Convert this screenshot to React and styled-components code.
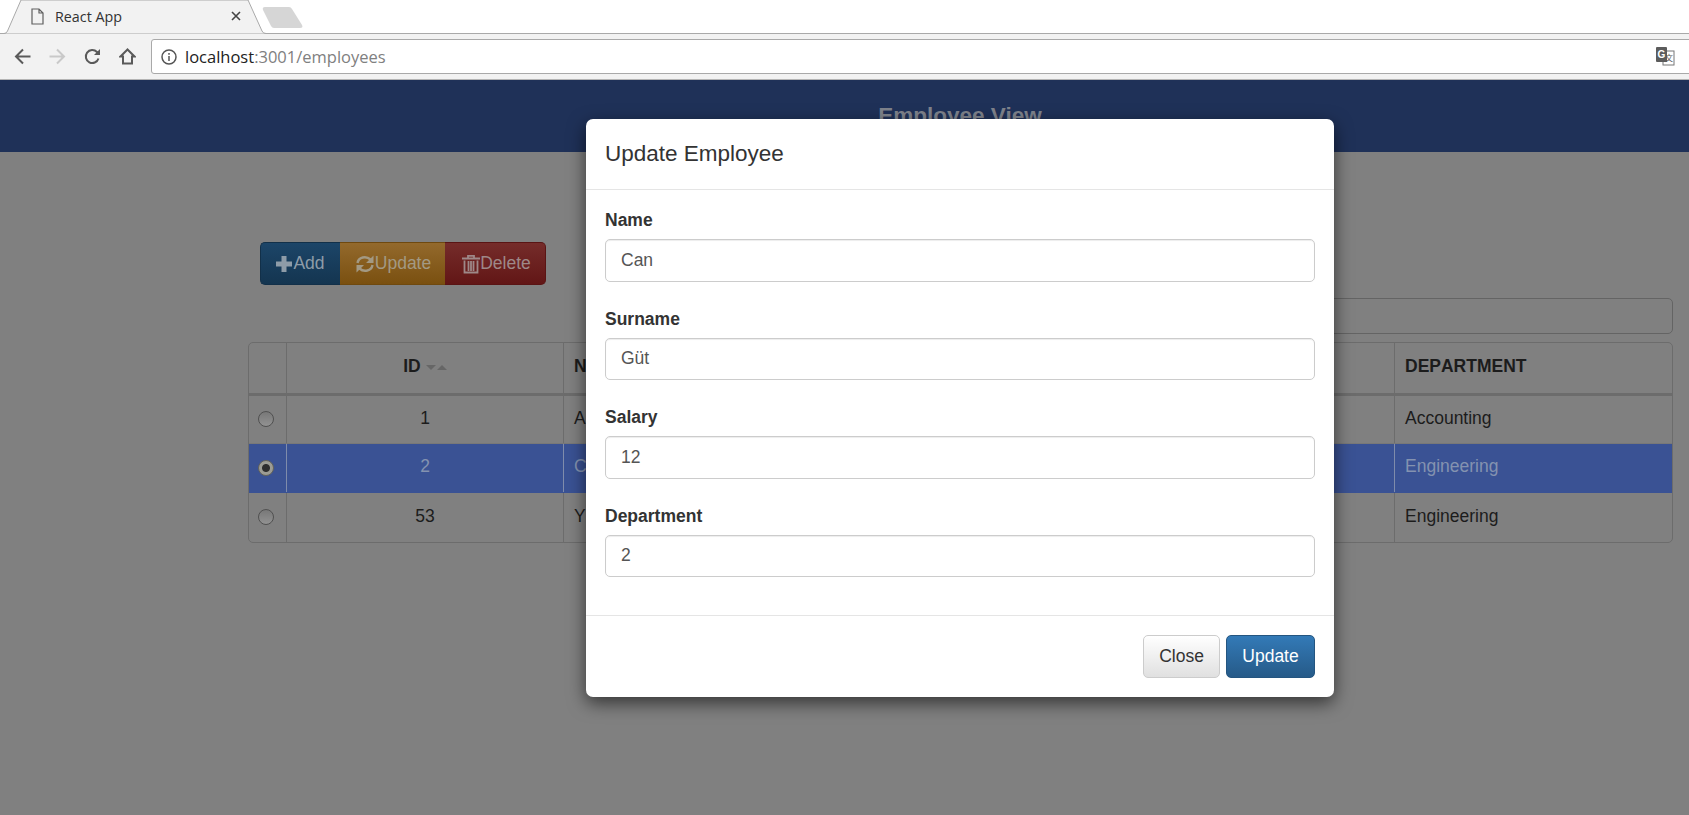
import React from "react";
import styled, { createGlobalStyle } from "styled-components";

const GlobalStyle = createGlobalStyle`
  html, body {
    margin: 0;
    height: 100%;
    overflow: hidden;
    background: #808080;
  }
  * {
    box-sizing: border-box;
  }
`;

const Screen = styled.div`
  height: 815px;
  overflow: hidden;
  font-family: "Liberation Sans", Arial, sans-serif;
`;

/* browser chrome */
const TabStrip = styled.div`
  height: 34px;
  background: #fff;
  border-bottom: 1px solid #a9a9a9;
  display: flex;
  align-items: flex-start;
`;

const Tab = styled.div`
  position: relative;
  width: 268px;
  height: 34px;
  display: flex;
  align-items: center;
  padding: 0 27px 2px 31px;
  gap: 11px;
  flex: none;
`;

const TabShape = styled.svg`
  position: absolute;
  left: 0;
  top: 0;
`;

const TabTitle = styled.span`
  position: relative;
  flex: 1;
  font: 14.3px "Open Sans", sans-serif;
  color: #333;
`;

const TabIcon = styled.svg`
  position: relative;
  flex: none;
`;

const TabClose = styled.svg`
  position: relative;
  flex: none;
`;

const NewTab = styled.svg`
  flex: none;
  margin: 7px 0 0 -6px;
`;

const Toolbar = styled.div`
  height: 46px;
  background: #f2f2f2;
  border-bottom: 1px solid #b4b4b4;
  display: flex;
  align-items: center;
  padding: 0 0 0 14px;
`;

const NavIcons = styled.div`
  display: flex;
  align-items: center;
  gap: 18px;
  flex: none;
  margin-right: 15px;
`;

const AddressBar = styled.div`
  flex: 1;
  height: 35px;
  margin-right: -6px;
  background: #fff;
  border: 1px solid #a9a9a9;
  border-radius: 3px;
  display: flex;
  align-items: center;
  padding: 0 19px 0 9px;
  font: 16.5px "Open Sans", sans-serif;
`;

const UrlHost = styled.span`
  color: #222;
  margin-left: 8px;
`;

const UrlRest = styled.span`
  color: #808080;
  flex: 1;
`;

/* page */
const Viewport = styled.div`
  position: relative;
  width: 1920px;
  height: 735px;
  background: #808080;
  font-size: 17.5px;
`;

const Banner = styled.header`
  height: 72px;
  background: #1f3158;
  color: #7f838c;
  font-size: 22.5px;
  font-weight: bold;
  display: flex;
  align-items: center;
  justify-content: center;
`;

const Content = styled.main`
  width: 1425px;
  margin: 0 auto;
  padding-top: 90px;
`;

const ButtonGroup = styled.div`
  display: flex;
  margin-left: 12px;
  height: 43px;
`;

const ActionButton = styled.button`
  height: 43px;
  width: ${(p) => p.$width}px;
  display: flex;
  align-items: center;
  justify-content: center;
  padding: 0 0 0 ${(p) => p.$inset || 0}px;
  border: 1px solid ${(p) => p.$edge};
  border-width: 1px 0;
  background: linear-gradient(${(p) => p.$top}, ${(p) => p.$bottom});
  color: ${(p) => p.$text};
  font: 17.5px "Liberation Sans", Arial, sans-serif;
  &:first-child {
    border-radius: 5px 0 0 5px;
    border-left-width: 1px;
  }
  &:last-child {
    border-radius: 0 5px 5px 0;
    border-right-width: 1px;
  }
`;

const SearchRow = styled.div`
  display: flex;
  justify-content: flex-end;
  margin-top: 13px;
`;

const SearchBox = styled.div`
  width: 712px;
  height: 36px;
  border: 1px solid #646464;
  border-radius: 5px;
`;

const TableFrame = styled.div`
  margin-top: 8px;
  border: 1px solid #6c6c6c;
  border-radius: 5px;
  overflow: hidden;
`;

const Table = styled.table`
  width: 100%;
  table-layout: fixed;
  border-collapse: collapse;
  color: #1c1c1c;
  font-kerning: none;
`;

const HeadCell = styled.th`
  height: 51px;
  padding: 0 10px 2px;
  font-weight: bold;
  text-align: ${(p) => (p.$center ? "center" : "left")};
  border-right: 1px solid #6c6c6c;
  border-bottom: 3px solid #6c6c6c;
  &:last-child {
    border-right: 0;
  }
`;

const Row = styled.tr`
  background: ${(p) => (p.$selected ? "#3a5294" : "transparent")};
  color: ${(p) => (p.$selected ? "#8492b0" : "#1c1c1c")};
`;

const Cell = styled.td`
  height: 49.3px;
  padding: 0 10px 2px;
  text-align: ${(p) => (p.$center ? "center" : "left")};
  border-right: 1px solid ${(p) => (p.$selected ? "#7f8cab" : "#6c6c6c")};
  border-bottom: 1px solid ${(p) => (p.$selected ? "#3a5294" : "#787878")};
  &:last-child {
    border-right: 0;
  }
  tr:last-child & {
    border-bottom: 0;
  }
`;

const SortCarets = styled.span`
  display: inline-flex;
  align-items: center;
  gap: 1px;
  margin-left: 5px;
  vertical-align: middle;
`;

const Caret = styled.i`
  width: 0;
  height: 0;
  border-left: 5px solid transparent;
  border-right: 5px solid transparent;
  border-${(p) => (p.$up ? "bottom" : "top")}: 5px solid #666;
`;

const Radio = styled.span`
  display: block;
  width: 16px;
  height: 16px;
  margin: 2px 0 0 -1px;
  border-radius: 50%;
  border: 1px solid ${(p) => (p.$checked ? "#62625a" : "#505050")};
  background: ${(p) =>
    p.$checked
      ? "radial-gradient(circle, #2e2e2e 0 3.5px, #9c9c94 4.5px)"
      : "linear-gradient(#787878, #929292)"};
`;

/* modal */
const Backdrop = styled.div`
  position: absolute;
  inset: 0;
  display: flex;
  justify-content: center;
  align-items: flex-start;
  padding-top: 39px;
`;

const Modal = styled.div`
  width: 748px;
  background: #fff;
  border-radius: 7px;
  box-shadow: 0 6px 18px rgba(0, 0, 0, 0.6);
  color: #333;
`;

const ModalHeader = styled.div`
  height: 71px;
  padding: 0 19px;
  display: flex;
  align-items: center;
  border-bottom: 1px solid #e5e5e5;
`;

const ModalTitle = styled.h4`
  margin: 0;
  font-size: 22.5px;
  font-weight: normal;
`;

const ModalBody = styled.form`
  padding: 18px 19px 38px;
  display: flex;
  flex-direction: column;
  gap: 25px;
`;

const Field = styled.div`
  display: flex;
  flex-direction: column;
  gap: 6px;
`;

const Label = styled.label`
  font-size: 17.5px;
  line-height: 25px;
  font-weight: bold;
  color: #333;
`;

const Input = styled.input`
  height: 42.5px;
  padding: 0 15px;
  border: 1px solid #ccc;
  border-radius: 5px;
  box-shadow: inset 0 1px 1px rgba(0, 0, 0, 0.075);
  font: 17.5px "Liberation Sans", Arial, sans-serif;
  color: #555;
  outline: none;
`;

const ModalFooter = styled.div`
  height: 82px;
  padding: 19px;
  display: flex;
  justify-content: flex-end;
  gap: 6px;
  border-top: 1px solid #e5e5e5;
`;

const FooterButton = styled.button`
  height: 42.5px;
  width: ${(p) => p.$width}px;
  padding: 0;
  border: 1px solid ${(p) => (p.$primary ? "#245580" : "#ccc")};
  border-radius: 5px;
  background: ${(p) =>
    p.$primary
      ? "linear-gradient(#337ab7, #265a88)"
      : "linear-gradient(#fff, #e0e0e0)"};
  color: ${(p) => (p.$primary ? "#fff" : "#333")};
  font: 17.5px "Liberation Sans", Arial, sans-serif;
`;

const Glyph = styled.svg`
  flex: none;
`;

const rows = [
  { id: 1, name: "Ali", surname: "Yılmaz", salary: 10, department: "Accounting" },
  { id: 2, name: "Can", surname: "Güt", salary: 12, department: "Engineering", selected: true },
  { id: 53, name: "Yan", surname: "Kaya", salary: 20, department: "Engineering" },
];

const fields = [
  { label: "Name", value: "Can" },
  { label: "Surname", value: "Güt" },
  { label: "Salary", value: "12" },
  { label: "Department", value: "2" },
];

function ArrowIcon({ color, flip }) {
  return (
    <Glyph width="17" height="17" viewBox="0 0 17 17" fill="none" stroke={color} strokeWidth="2"
      style={flip ? { transform: "scaleX(-1)" } : undefined}>
      <path d="M16.5 8.5H2M9 1.5l-7 7 7 7" />
    </Glyph>
  );
}

function ChromeBar() {
  return (
    <>
      <TabStrip>
        <Tab>
          <TabShape width="268" height="34" fill="#f2f2f2" stroke="#a9a9a9">
            <path d="M0 33.5H4Q6.5 33.5 7.5 31L21 0H248L262 31Q263 33.5 266 33.5H268" />
          </TabShape>
          <TabIcon width="13" height="17" viewBox="0 0 13 17" fill="none" stroke="#5f5f5f" strokeWidth="1.2">
            <path d="M1 1h7l4 4v11H1zM8 1v4h4" />
          </TabIcon>
          <TabTitle>React App</TabTitle>
          <TabClose width="10" height="10" viewBox="0 0 10 10" stroke="#444" strokeWidth="1.6">
            <path d="M1 1l8 8M9 1L1 9" />
          </TabClose>
        </Tab>
        <NewTab width="42" height="22" viewBox="0 0 42 22" fill="#d6d6d6">
          <path d="M3 0H27Q29 0 30 2L40 18Q41.5 21 38 21H12Q10 21 9 19L1 3Q0 0 3 0Z" />
        </NewTab>
      </TabStrip>
      <Toolbar>
        <NavIcons>
          <ArrowIcon color="#5a5a5a" />
          <ArrowIcon color="#c9c9c9" flip />
          <Glyph width="17" height="17" viewBox="0 0 17 17" fill="none" stroke="#5a5a5a" strokeWidth="2">
            <path d="M14.5 10.5A6.5 6.5 0 1 1 13 4L15 6" />
            <path d="M16 1v6h-6" fill="#5a5a5a" stroke="none" />
          </Glyph>
          <Glyph width="17" height="17" viewBox="0 0 17 17" fill="none" stroke="#5a5a5a" strokeWidth="2">
            <path d="M8.5 1.5L1.5 8.5H4V15.5H13V8.5H15.5Z" />
          </Glyph>
        </NavIcons>
        <AddressBar>
          <Glyph width="16" height="16" viewBox="0 0 16 16" fill="none" stroke="#555" strokeWidth="1.5">
            <circle cx="8" cy="8" r="7" />
            <path d="M8 7v5M8 4v1.8" />
          </Glyph>
          <UrlHost>localhost</UrlHost>
          <UrlRest>:3001/employees</UrlRest>
          <Glyph width="19" height="19" viewBox="0 0 19 19">
            <rect x="7" y="4" width="11" height="14" fill="#fff" stroke="#777" />
            <rect x="0" y="0" width="11" height="15" rx="1" fill="#5c5c5c" />
            <text x="5.5" y="11" textAnchor="middle" fontSize="10" fontWeight="bold" fill="#fff" fontFamily="Liberation Sans">G</text>
            <text x="13" y="14" textAnchor="middle" fontSize="8" fill="#555" fontFamily="Noto Sans CJK SC">文</text>
          </Glyph>
        </AddressBar>
      </Toolbar>
    </>
  );
}

function App() {
  return (
    <Screen>
      <GlobalStyle />
      <ChromeBar />
      <Viewport>
        <Banner>Employee View</Banner>
        <Content>
          <ButtonGroup>
            <ActionButton $width={80} $top="#1c4568" $bottom="#143550" $edge="#123049" $text="#8e9ca8">
              <Glyph width="18" height="18" viewBox="0 0 18 18" fill="#8e9ca8">
                <path d="M6.5 1h5v5.5H17v5h-5.5V17h-5v-5.5H1v-5h5.5z" />
              </Glyph>
              Add
            </ActionButton>
            <ActionButton $width={105} $inset={2} $top="#93692c" $bottom="#7a5010" $edge="#6f490f" $text="#a39983">
              <Glyph width="20" height="20" viewBox="0 0 20 20" fill="none" stroke="#a39983" strokeWidth="2.4">
                <path d="M2.5 9C3.5 3 11 1.5 15.5 5.5" />
                <path d="M17.5 11C16.5 17 9 18.5 4.5 14.5" />
                <path d="M18.5 1.5V9H11zM1.5 18.5V11H9z" fill="#a39983" stroke="none" />
              </Glyph>
              Update
            </ActionButton>
            <ActionButton $width={101} $inset={4} $top="#752c2a" $bottom="#621616" $edge="#5a1414" $text="#9e8888">
              <Glyph width="18" height="20" viewBox="0 0 18 20" fill="none" stroke="#9e8888" strokeWidth="1.8">
                <path d="M0 4.5h18M6 4V1.8h6V4" />
                <path d="M2.5 6.5V18.5H15.5V6.5M6.5 7V17M9 7V17M11.5 7V17" />
              </Glyph>
              Delete
            </ActionButton>
          </ButtonGroup>
          <SearchRow>
            <SearchBox />
          </SearchRow>
          <TableFrame>
            <Table>
              <colgroup>
                <col style={{ width: 38 }} />
              </colgroup>
              <thead>
                <tr>
                  <HeadCell />
                  <HeadCell $center>
                    ID
                    <SortCarets>
                      <Caret />
                      <Caret $up />
                    </SortCarets>
                  </HeadCell>
                  <HeadCell>NAME</HeadCell>
                  <HeadCell>SURNAME</HeadCell>
                  <HeadCell>SALARY</HeadCell>
                  <HeadCell>DEPARTMENT</HeadCell>
                </tr>
              </thead>
              <tbody>
                {rows.map((row) => (
                  <Row key={row.id} $selected={row.selected}>
                    <Cell $selected={row.selected}>
                      <Radio $checked={row.selected} />
                    </Cell>
                    <Cell $center $selected={row.selected}>{row.id}</Cell>
                    <Cell $selected={row.selected}>{row.name}</Cell>
                    <Cell $selected={row.selected}>{row.surname}</Cell>
                    <Cell $selected={row.selected}>{row.salary}</Cell>
                    <Cell $selected={row.selected}>{row.department}</Cell>
                  </Row>
                ))}
              </tbody>
            </Table>
          </TableFrame>
        </Content>
        <Backdrop>
          <Modal>
            <ModalHeader>
              <ModalTitle>Update Employee</ModalTitle>
            </ModalHeader>
            <ModalBody>
              {fields.map((field) => (
                <Field key={field.label}>
                  <Label>{field.label}</Label>
                  <Input readOnly value={field.value} />
                </Field>
              ))}
            </ModalBody>
            <ModalFooter>
              <FooterButton type="button" $width={77}>Close</FooterButton>
              <FooterButton type="button" $width={89} $primary>Update</FooterButton>
            </ModalFooter>
          </Modal>
        </Backdrop>
      </Viewport>
    </Screen>
  );
}

export default App;
